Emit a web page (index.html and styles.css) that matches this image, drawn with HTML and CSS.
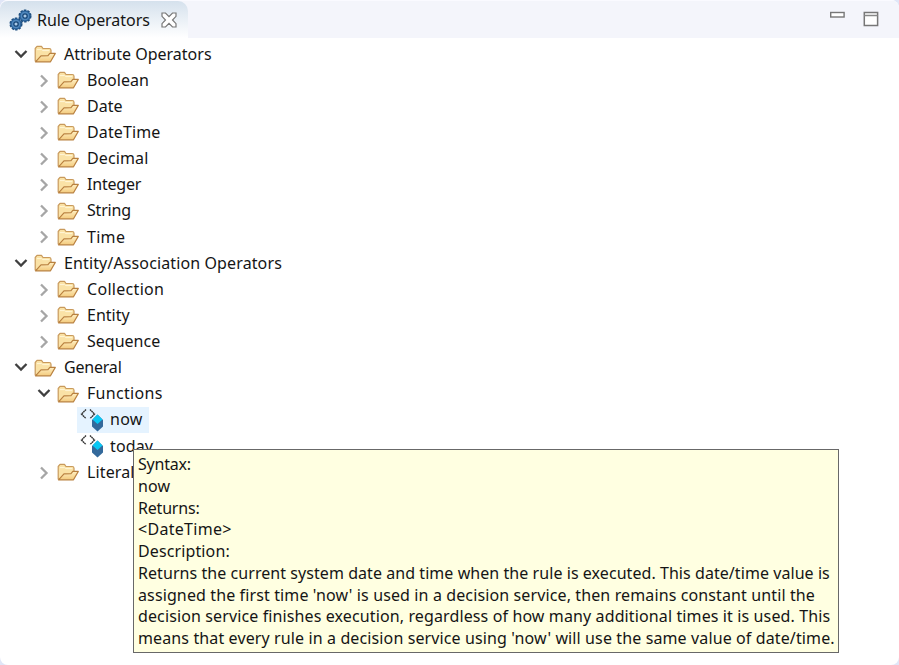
FILE: index.html
```
<!DOCTYPE html>
<html lang="en">
<head>
<meta charset="utf-8">
<title>Rule Operators</title>
<link rel="stylesheet" href="styles.css">
</head>
<body>
<svg class="defs" width="0" height="0" aria-hidden="true">
  <defs>
    <linearGradient id="gold" x1="0" y1="0" x2="0" y2="1"><stop offset="0" stop-color="#fff0c4"/><stop offset="1" stop-color="#f3ca7c"/></linearGradient>
    <symbol id="folder" viewBox="0 0 22 18">
      <path d="M1.200 16V3.500L3 1.400h4.500L9 3.500h6.200q1.800 0 1.800 1.800V10L12 15z" fill="#fae2a6" stroke="#c99a5c" stroke-width="1.200" stroke-linejoin="round"/>
      <path d="M3 4.600h4.500l1.300 1h6.500" fill="none" stroke="#fff6d8"/>
      <path d="M1.500 16.800 7 10.900l7-.3 1.800-2.200h5.500l-4.800 8.400z" fill="url(#gold)" stroke="#b98140" stroke-width="1.200" stroke-linejoin="round"/>
    </symbol>
    <symbol id="open" viewBox="0 0 14 10"><path d="M1.500 2 7 7.500 12.500 2" fill="none" stroke="#404040" stroke-width="2.300"/></symbol>
    <symbol id="closed" viewBox="0 0 10 14"><path d="M2 1.500 7.500 7 2 12.500" fill="none" stroke="#a6a6a6" stroke-width="2.300"/></symbol>
    <symbol id="operator" viewBox="0 0 24 24">
      <path d="M6 1.500 1.500 6 6 10.500M10 1.500 14.500 6 10 10.500" fill="none" stroke="#333" stroke-width="1.400" stroke-dasharray="1.700 .4"/>
      <path d="M17.500 6.500 23 12v6.500l-5.500 5-5.500-5V12z" fill="#34699b"/>
      <path d="M17.500 6.500 22.500 11.500l-5 4.500-5-4.500z" fill="#08c8f4"/>
    </symbol>
    <symbol id="gear" viewBox="0 0 14 14">
      <circle cx="7" cy="7" r="5.700" fill="#3d75ae" stroke="#205080" stroke-width="1.700" stroke-dasharray="2.400 1.180"/>
      <circle cx="7" cy="7" r="4.900" fill="#4f87bd" stroke="#255d96"/>
      <circle cx="7" cy="7" r="2.200" fill="#a9c9e6" stroke="#174677" stroke-width="1.300"/>
    </symbol>
  </defs>
</svg>
<div class="view">
  <header class="bar">
    <div class="tab">
      <svg class="gears" viewBox="0 0 24 24"><use href="#gear" x="0" y="9" width="14" height="14"/><use href="#gear" x="9" y="1" width="14" height="14"/></svg>
      <span class="title">Rule Operators</span>
      <svg class="close" viewBox="0 0 16 16"><path d="M1 1h3.500L8 4.700 11.500 1H15v3.300L11.500 8l3.500 3.700V15h-3.500L8 11.300 4.500 15H1v-3.300L4.500 8 1 4.300z" fill="#fff" stroke="#777" stroke-width="1.200"/></svg>
    </div>
    <div class="controls">
      <svg class="minimize" viewBox="0 0 16 16"><rect x="1.700" y="1.500" width="13.400" height="4.500" fill="#fff" stroke="#777" stroke-width="1.400"/></svg>
      <svg class="maximize" viewBox="0 0 16 16"><rect x="1.300" y="1.500" width="13.300" height="13" fill="#fff" stroke="#777" stroke-width="1.500"/><path d="M1.300 4.500h13.300" stroke="#888" stroke-width="1.400"/></svg>
    </div>
  </header>
  <main class="tree">
    <div class="row"><svg class="arrow"><use href="#open" y="3" width="14" height="10"/></svg><svg class="folder"><use href="#folder"/></svg><span class="label snug">Attribute Operators</span></div>
    <div class="row child"><svg class="arrow"><use href="#closed" x="2" y="2" width="10" height="14"/></svg><svg class="folder"><use href="#folder"/></svg><span class="label snug">Boolean</span></div>
    <div class="row child"><svg class="arrow"><use href="#closed" x="2" y="2" width="10" height="14"/></svg><svg class="folder"><use href="#folder"/></svg><span class="label snug">Date</span></div>
    <div class="row child"><svg class="arrow"><use href="#closed" x="2" y="2" width="10" height="14"/></svg><svg class="folder"><use href="#folder"/></svg><span class="label">DateTime</span></div>
    <div class="row child"><svg class="arrow"><use href="#closed" x="2" y="2" width="10" height="14"/></svg><svg class="folder"><use href="#folder"/></svg><span class="label">Decimal</span></div>
    <div class="row child"><svg class="arrow"><use href="#closed" x="2" y="2" width="10" height="14"/></svg><svg class="folder"><use href="#folder"/></svg><span class="label tight">Integer</span></div>
    <div class="row child"><svg class="arrow"><use href="#closed" x="2" y="2" width="10" height="14"/></svg><svg class="folder"><use href="#folder"/></svg><span class="label tight">String</span></div>
    <div class="row child"><svg class="arrow"><use href="#closed" x="2" y="2" width="10" height="14"/></svg><svg class="folder"><use href="#folder"/></svg><span class="label wide">Time</span></div>
    <div class="row"><svg class="arrow"><use href="#open" y="3" width="14" height="10"/></svg><svg class="folder"><use href="#folder"/></svg><span class="label">Entity/Association Operators</span></div>
    <div class="row child"><svg class="arrow"><use href="#closed" x="2" y="2" width="10" height="14"/></svg><svg class="folder"><use href="#folder"/></svg><span class="label wide">Collection</span></div>
    <div class="row child"><svg class="arrow"><use href="#closed" x="2" y="2" width="10" height="14"/></svg><svg class="folder"><use href="#folder"/></svg><span class="label snug">Entity</span></div>
    <div class="row child"><svg class="arrow"><use href="#closed" x="2" y="2" width="10" height="14"/></svg><svg class="folder"><use href="#folder"/></svg><span class="label snug">Sequence</span></div>
    <div class="row"><svg class="arrow"><use href="#open" y="3" width="14" height="10"/></svg><svg class="folder"><use href="#folder"/></svg><span class="label tight">General</span></div>
    <div class="row child"><svg class="arrow"><use href="#open" y="3" width="14" height="10"/></svg><svg class="folder"><use href="#folder"/></svg><span class="label wide">Functions</span></div>
    <div class="row leaf selected"><svg class="operator"><use href="#operator"/></svg><span class="label wide">now</span></div>
    <div class="row leaf"><svg class="operator"><use href="#operator"/></svg><span class="label">today</span></div>
    <div class="row child"><svg class="arrow"><use href="#closed" x="2" y="2" width="10" height="14"/></svg><svg class="folder"><use href="#folder"/></svg><span class="label">Literal</span></div>
  </main>
  <div class="tooltip" role="tooltip">
    <div class="tight">Syntax:</div>
    <div>now</div>
    <div class="tight">Returns:</div>
    <div class="wide">&lt;DateTime&gt;</div>
    <div>Description:</div>
    <div class="first-line">Returns the current system date and time when the rule is executed. This date/time value is</div>
    <div>assigned the first time 'now' is used in a decision service, then remains constant until the</div>
    <div>decision service finishes execution, regardless of how many additional times it is used. This</div>
    <div>means that every rule in a decision service using 'now' will use the same value of date/time.</div>
  </div>
</div>
</body>
</html>
```
FILE: styles.css
```
* { box-sizing: border-box; }
body { margin: 0; background: #e0e6f7; color: #151515; font: 16px/21.75px "Noto Sans", "Open Sans", sans-serif; letter-spacing: 0.12px; }
svg { display: block; flex: none; }
.defs { position: absolute; }
.view { position: relative; height: 665px; background: #fff; border-radius: 8px; overflow: hidden; }
.bar { display: flex; justify-content: space-between; height: 38px; background: #f4f5fb; border-top: 1px solid #fafaff; }
.tab { display: flex; align-items: center; width: 188px; padding-left: 9px; border-radius: 8px 10px 0 0; background: linear-gradient(#d5e1ed, #fff); }
.gears { width: 24px; height: 24px; }
.title { width: 115px; margin-left: 4px; padding-top: 2px; white-space: nowrap; letter-spacing: -0.05px; }
.close { width: 16px; height: 16px; margin-left: 9px; }
.controls { display: flex; gap: 18px; padding: 10px 20px 0 0; }
.controls svg { width: 16px; height: 16px; }
.tree { padding-top: 3px; }
.row { display: flex; align-items: center; height: 26.13px; padding-left: 14px; white-space: nowrap; }
.child { padding-left: 37px; }
.arrow { width: 14px; height: 17px; }
.folder { width: 22px; height: 18px; margin-left: 6px; }
.label { margin-left: 8px; padding-top: 1px; }
.leaf { width: 72px; margin-left: 77px; padding-left: 3px; }
.selected { background: #e5f3ff; }
.operator { width: 24px; height: 24px; }
.leaf .label { margin-left: 6px; }
.tight { letter-spacing: -0.2px; }
.snug { letter-spacing: 0; }
.wide { letter-spacing: 0.3px; }
.tooltip { position: absolute; left: 133px; top: 449px; width: 706px; height: 204px; padding: 4px 0 0 4px; border: 1px solid #686868; background: #ffffe1; white-space: nowrap; }
.first-line { letter-spacing: 0.06px; }
```
